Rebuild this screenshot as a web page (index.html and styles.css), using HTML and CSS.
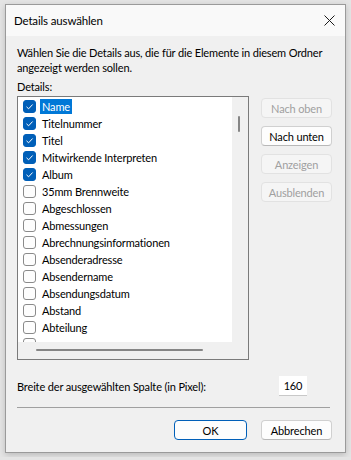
FILE: index.html
```html
<!DOCTYPE HTML>
<html>

<head>
    <meta name="viewport" content="width=device-width, initial-scale=1">
    <title>Details auswählen</title>
    <link rel="stylesheet" href="styles.css">
</head>

<body>
    <div class="dialog">
        <div class="titlebar">
            <span class="title">Details auswählen</span>
            <svg class="close" width="11" height="11" viewBox="0 0 11 11">
                <path d="M0.5 0.5 L10.5 10.5 M10.5 0.5 L0.5 10.5" stroke="#1a1a1a" stroke-width="1" fill="none"/>
            </svg>
        </div>
        <div class="content">
            <p class="intro">Wählen Sie die Details aus, die für die Elemente in diesem Ordner angezeigt werden sollen.</p>
            <p class="label">Details:</p>
            <div class="main">
                <div class="listbox">
                    <div class="listarea">
                        <ul class="items">
                            <li><span class="check on"></span><span class="text selected">Name</span></li>
                            <li><span class="check on"></span><span class="text">Titelnummer</span></li>
                            <li><span class="check on"></span><span class="text">Titel</span></li>
                            <li><span class="check on"></span><span class="text">Mitwirkende Interpreten</span></li>
                            <li><span class="check on"></span><span class="text">Album</span></li>
                            <li><span class="check"></span><span class="text">35mm Brennweite</span></li>
                            <li><span class="check"></span><span class="text">Abgeschlossen</span></li>
                            <li><span class="check"></span><span class="text">Abmessungen</span></li>
                            <li><span class="check"></span><span class="text">Abrechnungsinformationen</span></li>
                            <li><span class="check"></span><span class="text">Absenderadresse</span></li>
                            <li><span class="check"></span><span class="text">Absendername</span></li>
                            <li><span class="check"></span><span class="text">Absendungsdatum</span></li>
                            <li><span class="check"></span><span class="text">Abstand</span></li>
                            <li><span class="check"></span><span class="text">Abteilung</span></li>
                            <li><span class="check"></span></li>
                        </ul>
                        <div class="vscroll"><span class="vthumb"></span></div>
                    </div>
                    <div class="hscroll"><span class="hthumb"></span></div>
                </div>
                <div class="side">
                    <button class="btn" disabled>Nach oben</button>
                    <button class="btn">Nach unten</button>
                    <button class="btn" disabled>Anzeigen</button>
                    <button class="btn" disabled>Ausblenden</button>
                </div>
            </div>
            <div class="width-row">
                <span>Breite der ausgewählten Spalte (in Pixel):</span>
                <span class="num">160</span>
            </div>
            <hr>
            <div class="footer">
                <button class="btn default">OK</button>
                <button class="btn">Abbrechen</button>
            </div>
        </div>
    </div>
</body>

</html>
```

FILE: styles.css
```css
html {
    font-family: Lato, "Noto Sans", sans-serif;
    font-size: 11px;
    letter-spacing: -0.15px;
    color: #000;
}

body {
    margin: 0;
    padding: 4px 5px;
    background: #e4e4e4;
}

.dialog {
    width: 339px;
    height: 447px;
    border: 1px solid #9a9a9a;
    background: #f0f0f0;
    box-shadow: 0 2px 6px rgba(0, 0, 0, 0.18);
    display: flex;
    flex-direction: column;
}

.titlebar {
    height: 31px;
    background: #f9f9f9;
    display: flex;
    align-items: center;
    justify-content: space-between;
    padding: 0 10px 0 8px;
}

.title {
    font-size: 11.5px;
}

.content {
    padding: 9px 13px 0 11px;
}

p {
    margin: 0;
    line-height: 15px;
}

.intro {
    margin-bottom: 4px;
}

.label {
    margin-bottom: 2px;
}

.main {
    display: flex;
    gap: 12px;
}

.listbox {
    width: 231px;
    height: 262px;
    border: 1px solid #7a7a7a;
    background: #f0f0f0;
    display: flex;
    flex-direction: column;
}

.listarea {
    flex: 1;
    display: flex;
    overflow: hidden;
}

.items {
    list-style: none;
    margin: 0;
    padding: 1px 0 0 0;
    width: 214px;
    background: #fff;
    overflow: hidden;
}

.items li {
    height: 17px;
    display: flex;
    align-items: center;
    padding-left: 5px;
    white-space: nowrap;
}

.check {
    width: 11px;
    height: 11px;
    border: 1px solid #8a8a8a;
    border-radius: 3px;
    background: #fdfdfd;
    margin-right: 4px;
    flex: none;
}

.check.on {
    border-color: #005fb8;
    background: #005fb8 url("data:image/svg+xml,%3Csvg xmlns='http://www.w3.org/2000/svg' width='11' height='11'%3E%3Cpath d='M2.5 5.8 L4.6 7.8 L8.6 3.5' stroke='%23ffffff' stroke-width='1' fill='none'/%3E%3C/svg%3E") no-repeat center;
}

.text {
    padding: 0 2px;
    line-height: 15px;
}

.text.selected {
    background: #0078d7;
    color: #fff;
}

.vscroll {
    flex: 1;
    position: relative;
}

.vthumb {
    position: absolute;
    left: 6px;
    top: 19px;
    width: 2px;
    height: 16px;
    background: #858585;
    border-radius: 1px;
}

.hscroll {
    height: 17px;
    position: relative;
}

.hthumb {
    position: absolute;
    left: 18px;
    top: 7px;
    width: 167px;
    height: 2px;
    background: #858585;
    border-radius: 1px;
}

.side {
    display: flex;
    flex-direction: column;
    gap: 8px;
    padding-top: 2px;
}

.btn {
    width: 71px;
    height: 20px;
    font-family: inherit;
    font-size: 11px;
    letter-spacing: -0.15px;
    color: #000;
    background: #fdfdfd;
    border: 1px solid #d0d0d0;
    border-bottom-color: #b8b8b8;
    border-radius: 4px;
    padding: 0;
}

.btn:disabled {
    color: #a0a0a0;
    background: #f5f5f5;
    border-color: #e2e2e2;
}

.btn.default {
    width: 73px;
    border: 1px solid #005fb8;
}

.width-row {
    display: flex;
    justify-content: space-between;
    align-items: center;
    margin-top: 16px;
    padding-right: 25px;
}

.num {
    width: 28px;
    height: 19px;
    background: #fff;
    border-bottom: 1px solid #c8c8c8;
    display: flex;
    align-items: center;
    justify-content: center;
}

hr {
    border: 0;
    border-top: 1px solid #a0a0a0;
    margin: 11px 2px 0 0;
}

.footer {
    display: flex;
    justify-content: flex-end;
    gap: 14px;
    margin-top: 12px;
}
```
